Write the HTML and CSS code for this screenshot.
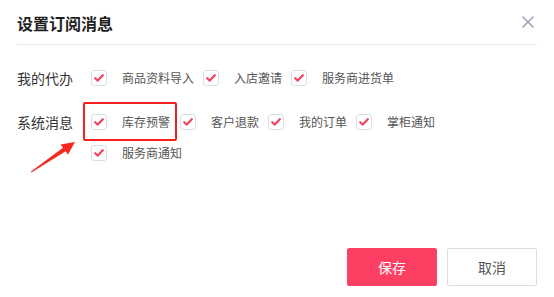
FILE: index.html
```html
<!DOCTYPE html>
<html lang="zh-CN">
<head>
<meta charset="utf-8">
<title>设置订阅消息</title>
<link rel="stylesheet" href="styles.css">
</head>
<body>
<div class="dialog">
  <div class="header">
    <div class="title">设置订阅消息</div>
    <svg class="close" width="12" height="12" viewBox="0 0 12 12"><path d="M1 1 L11 11 M11 1 L1 11" stroke="#9ea2b4" stroke-width="1.6" stroke-linecap="round"/></svg>
  </div>
  <div class="body">
    <div class="row">
      <div class="row-label">我的代办</div>
      <div class="opts">
        <span class="opt"><span class="cb"><svg width="10" height="8" viewBox="0 0 10 8"><path d="M1.2 4.2 L3.8 6.6 L8.8 1.2" fill="none" stroke="#f4455f" stroke-width="2.2" stroke-linecap="round" stroke-linejoin="round"/></svg></span><span class="opt-text">商品资料导入</span></span>
        <span class="opt"><span class="cb"><svg width="10" height="8" viewBox="0 0 10 8"><path d="M1.2 4.2 L3.8 6.6 L8.8 1.2" fill="none" stroke="#f4455f" stroke-width="2.2" stroke-linecap="round" stroke-linejoin="round"/></svg></span><span class="opt-text">入店邀请</span></span>
        <span class="opt"><span class="cb"><svg width="10" height="8" viewBox="0 0 10 8"><path d="M1.2 4.2 L3.8 6.6 L8.8 1.2" fill="none" stroke="#f4455f" stroke-width="2.2" stroke-linecap="round" stroke-linejoin="round"/></svg></span><span class="opt-text">服务商进货单</span></span>
      </div>
    </div>
    <div class="row row-sys">
      <div class="row-label">系统消息</div>
      <div class="opts">
        <span class="opt"><span class="cb"><svg width="10" height="8" viewBox="0 0 10 8"><path d="M1.2 4.2 L3.8 6.6 L8.8 1.2" fill="none" stroke="#f4455f" stroke-width="2.2" stroke-linecap="round" stroke-linejoin="round"/></svg></span><span class="opt-text">库存预警</span></span>
        <span class="opt"><span class="cb"><svg width="10" height="8" viewBox="0 0 10 8"><path d="M1.2 4.2 L3.8 6.6 L8.8 1.2" fill="none" stroke="#f4455f" stroke-width="2.2" stroke-linecap="round" stroke-linejoin="round"/></svg></span><span class="opt-text">客户退款</span></span>
        <span class="opt"><span class="cb"><svg width="10" height="8" viewBox="0 0 10 8"><path d="M1.2 4.2 L3.8 6.6 L8.8 1.2" fill="none" stroke="#f4455f" stroke-width="2.2" stroke-linecap="round" stroke-linejoin="round"/></svg></span><span class="opt-text">我的订单</span></span>
        <span class="opt"><span class="cb"><svg width="10" height="8" viewBox="0 0 10 8"><path d="M1.2 4.2 L3.8 6.6 L8.8 1.2" fill="none" stroke="#f4455f" stroke-width="2.2" stroke-linecap="round" stroke-linejoin="round"/></svg></span><span class="opt-text">掌柜通知</span></span>
        <span class="opt"><span class="cb"><svg width="10" height="8" viewBox="0 0 10 8"><path d="M1.2 4.2 L3.8 6.6 L8.8 1.2" fill="none" stroke="#f4455f" stroke-width="2.2" stroke-linecap="round" stroke-linejoin="round"/></svg></span><span class="opt-text">服务商通知</span></span>
      </div>
    </div>
  </div>
  <div class="footer">
    <button class="btn btn-primary">保存</button>
    <button class="btn btn-default">取消</button>
  </div>
  <div class="highlight"></div>
  <svg class="arrow" width="50" height="36" viewBox="0 0 50 36">
    <path d="M1.5 32.5 L35.6 11.3 L38 14.6 L45 2 L30.6 4.4 L33 7.8 L1 31.5 Z" fill="#f5281f"/>
  </svg>
</div>
</body>
</html>
```
FILE: styles.css
```css
* { box-sizing: border-box; }
html, body { margin: 0; padding: 0; background: #fff; }
body {
  font-family: "Noto Sans CJK SC", "Noto Sans", sans-serif;
  color: #333;
}
.dialog {
  position: relative;
  width: 554px;
  height: 297px;
  padding: 0 17px;
  display: flex;
  flex-direction: column;
}
.header {
  height: 45px;
  padding-top: 1px;
  display: flex;
  align-items: center;
  justify-content: space-between;
  border-bottom: 1px solid #e6e7ef;
}
.title {
  font-size: 16px;
  font-weight: bold;
  color: #1f1f1f;
  line-height: 22px;
}
.close { margin-right: 3px; margin-top: -2px; }
.body { padding-top: 25px; flex: 1; }
.row { display: flex; align-items: flex-start; }
.row-sys { margin-top: 28px; }
.row-label {
  width: 74px;
  flex: none;
  font-size: 14px;
  line-height: 16px;
  color: #333;
}
.opts {
  display: flex;
  flex-wrap: wrap;
  row-gap: 15px;
  width: 400px;
}
.opt {
  display: flex;
  align-items: center;
  height: 16px;
}
.cb {
  width: 16px;
  height: 16px;
  border: 1px solid #dcdee6;
  border-radius: 3px;
  display: flex;
  align-items: center;
  justify-content: center;
  background: #fff;
}
.cb svg { display: block; }
.opt-text {
  margin-left: 15px;
  margin-right: 9px;
  font-size: 12px;
  line-height: 16px;
  color: #555;
}
.row-sys .opt:first-child .opt-text { margin-right: 10px; }
.row-sys .opts { width: 360px; }
.footer {
  display: flex;
  justify-content: flex-end;
  gap: 10px;
  padding-bottom: 11px;
}
.btn {
  width: 90px;
  height: 38px;
  border-radius: 2px;
  font-family: "Noto Sans CJK SC", sans-serif;
  font-size: 14px;
  cursor: pointer;
}
.btn-primary {
  background: #fd3f64;
  border: 1px solid #fd3f64;
  color: #fff;
}
.btn-default {
  background: #fff;
  border: 1px solid #dcdee6;
  color: #555;
}
.highlight {
  position: absolute;
  left: 83px;
  top: 102px;
  width: 94px;
  height: 39px;
  border: 2px solid #f5201b;
  border-radius: 2px;
}
.arrow {
  position: absolute;
  left: 30px;
  top: 140px;
}
```
